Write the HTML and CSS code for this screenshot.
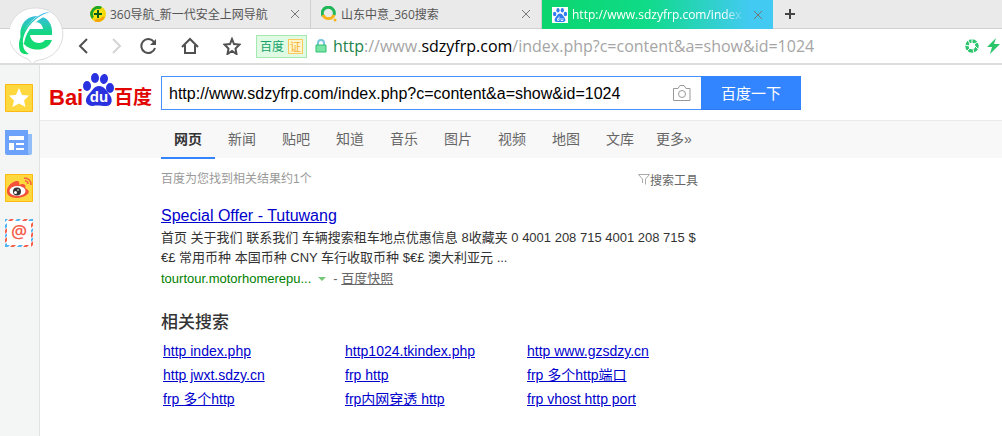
FILE: index.html
```html
<!DOCTYPE html>
<html lang="zh-CN">
<head>
    <meta charset="UTF-8">
    <meta name="viewport" content="width=device-width, initial-scale=1.0">
    <title>百度搜索</title>
    <link rel="stylesheet" href="styles.css">
</head>
<body>
<header class="browser">
    <a class="brand" href="#" aria-label="360">
        <svg width="54" height="58" viewBox="0 0 54 58">
            <defs>
                <linearGradient id="eColor" gradientUnits="userSpaceOnUse" x1="0" y1="6" x2="0" y2="47">
                    <stop offset="0" stop-color="#3fb8f2"/>
                    <stop offset="0.5" stop-color="#14d780"/>
                    <stop offset="1" stop-color="#12dc66"/>
                </linearGradient>
            </defs>
            <path d="M27 1a26 26 0 0 1 7 51q-5 1-8 2l-4 3-4-5A26 26 0 0 1 27 1z" fill="#fff" stroke="#dcdcdc"/>
            <path fill="url(#eColor)" fill-rule="evenodd" d="M42 28H20c1 9 12 10 15 5h7c-4 12-21 12-28 4C7 29 10 10 26 9c12 0 17 8 16 19zM20 22h13c-1-9-12-9-13 0z"/>
            <path d="M39 6C29 8 15 19 12 36" fill="none" stroke="#fff" stroke-width="4"/>
            <path d="M40 5C27 5 9 24 9 38c0 8 4 10 10 9-5-3-6-7-6-11C12 25 24 9 40 5z" fill="url(#eColor)"/>
        </svg>
    </a>
    <nav class="tabs">
        <div class="tab">
            <svg class="tabicon" width="16" height="16" viewBox="0 0 16 16">
                <circle cx="8" cy="8" r="8" fill="#f6d90c"/>
                <path d="M2 13A8 8 0 0 1 12 1L8 6z" fill="#1fa52c"/>
                <path d="M4 15a8 8 0 0 0 11-4L9 10z" fill="#f4a50a"/>
                <circle cx="8" cy="8" r="5" fill="#fbe516"/>
                <path d="M8 4v8M4 8h8" stroke="#075c17" stroke-width="2"/>
            </svg>
            <a class="tabname" href="#">360导航_新一代安全上网导航</a>
            <button class="close" aria-label="关闭"><svg width="10" height="10" viewBox="0 0 10 10"><path d="M1 1l8 8M9 1L1 9"/></svg></button>
        </div>
        <div class="tab">
            <svg class="tabicon" width="16" height="16" viewBox="0 0 16 16">
                <path d="M2 10A6 6 0 1 1 13 9" fill="none" stroke="#1fb758" stroke-width="3"/>
                <path d="M2 9a6 6 0 0 0 11 0" fill="none" stroke="#f8b51c" stroke-width="3"/>
                <circle cx="14" cy="14" r="1.5" fill="#f8b51c"/>
            </svg>
            <a class="tabname" href="#">山东中意_360搜索</a>
            <button class="close" aria-label="关闭"><svg width="10" height="10" viewBox="0 0 10 10"><path d="M1 1l8 8M9 1L1 9"/></svg></button>
        </div>
        <div class="tab active">
            <svg class="tabicon" width="16" height="16" viewBox="0 0 16 16">
                <rect width="16" height="16" fill="#fff"/>
                <g fill="#2e7cf0">
                    <ellipse cx="2.7" cy="7" rx="1.7" ry="2.2"/>
                    <ellipse cx="6" cy="3.2" rx="1.6" ry="2.3"/>
                    <ellipse cx="10.3" cy="3.2" rx="1.6" ry="2.3"/>
                    <ellipse cx="13.4" cy="7" rx="1.7" ry="2.2"/>
                    <path d="M8 6.5c2 0 3 2 4 3.500 2 2 2 5-1 5H5c-3 0-3-3-1-5C5 8.500 6 6.500 8 6.500z"/>
                </g>
                <path d="M7 9.500v4H5.500v-2H7M9 11v2.500h2V11" fill="none" stroke="#fff" stroke-width="0.8"/>
            </svg>
            <a class="tabname" href="#">http://www.sdzyfrp.com/index</a>
            <button class="close" aria-label="关闭"><svg width="10" height="10" viewBox="0 0 10 10"><path d="M1 1l8 8M9 1L1 9"/></svg></button>
        </div>
        <button class="newtab" aria-label="新标签页"><svg width="12" height="12" viewBox="0 0 12 12"><path d="M6 1v10M1 6h10" stroke="#444" stroke-width="2"/></svg></button>
    </nav>
    <div class="toolbar">
        <div class="navbtns">
            <div class="history">
                <button aria-label="后退"><svg width="18" height="18" viewBox="0 0 18 18"><path d="M12 2L5 9l7 7" fill="none" stroke="#505050" stroke-width="2"/></svg></button>
                <button aria-label="前进"><svg width="18" height="18" viewBox="0 0 18 18"><path d="M6 2l7 7-7 7" fill="none" stroke="#d4d4d4" stroke-width="2"/></svg></button>
                <button aria-label="刷新"><svg width="18" height="18" viewBox="0 0 18 18"><path d="M15 5a7 7 0 1 0 1 6" fill="none" stroke="#505050" stroke-width="2"/><path d="M17 2v6h-6z" fill="#505050"/></svg></button>
            </div>
            <button aria-label="主页"><svg width="18" height="18" viewBox="0 0 18 18"><path d="M1 10l8-8 8 8M4 8v8h10V8" fill="none" stroke="#505050" stroke-width="2"/></svg></button>
            <button aria-label="收藏"><svg width="18" height="18" viewBox="0 0 18 18"><path d="M9 2l2 5 5.500.5-4 4 1 5.500L9 14l-4.500 3 1-5.500-4-4L7 7z" fill="none" stroke="#505050" stroke-width="2"/></svg></button>
        </div>
        <span class="site">百度<span class="cert">证</span></span>
        <svg class="lock" width="12" height="14" viewBox="0 0 12 14">
            <path d="M3 6V4a3 3 0 0 1 6 0v2" fill="none" stroke="#77c5dc" stroke-width="2"/>
            <path d="M1 6h10v7H1z" fill="#79e5a5" stroke="#31bd72"/>
        </svg>
        <a class="address" href="#"><span class="scheme">http</span>://www.<span class="host">sdzyfrp.com</span>/index.php?c=content&amp;a=show&amp;id=1024</a>
        <div class="tools">
            <button aria-label="极速"><svg width="14" height="14" viewBox="0 0 14 14"><circle cx="7" cy="7" r="5" fill="none" stroke="#2bc56c" stroke-width="3.500"/><path d="M7 4V0M9 5l4-2M10 7l3 3M8 10l1 4M5 9l-3 3M4 7L0 6M5 5L3 1" stroke="#fff"/></svg></button>
            <button aria-label="加速"><svg width="13" height="16" viewBox="0 0 13 16"><path d="M9 0L0 9h5l-2 7 10-10H7z" fill="#2bc56c"/></svg></button>
        </div>
    </div>
</header>
<div class="container">
    <aside class="side">
        <a href="#" aria-label="收藏夹"><svg width="28" height="28" viewBox="0 0 28 28"><path d="M.5.5h27v27H.5z" fill="#ffd83f" stroke="#fcba12"/><path d="M14 4l3 7 7 .5-5 5 1.500 6.500L14 19.500 7.500 23 9 16.500l-5-5 7-.5z" fill="#fff"/></svg></a>
        <a href="#" aria-label="新闻"><svg width="28" height="28" viewBox="0 0 28 28"><path d="M22 5h5v19q0 2-3 2h-4z" fill="#91bdf8"/><path d="M0 1h23v22q0 3 2 3H2q-2 0-2-2z" fill="#6da2fb"/><path d="M4 7h15v4H4zM4 14h5v7H4zM11 14h8v2h-8zM11 19h8v2h-8z" fill="#fff"/></svg></a>
        <a href="#" aria-label="微博"><svg width="28" height="28" viewBox="0 0 28 28"><path d="M.5.5h27v27H.5z" fill="#ffd83f" stroke="#fcba12"/><path d="M2 18C1 13 8 6 13 7q2 1 1 4 4-2 6 0 1 2 0 3c9 4 0 10-8 10-6 0-10-3-10-6z" fill="#f4513b"/><ellipse cx="12.500" cy="17" rx="8" ry="5" fill="#fff"/><circle cx="12" cy="17.500" r="4" fill="#333"/><circle cx="10.500" cy="18.500" r="1.500" fill="#fff"/><circle cx="13" cy="16" r="0.8" fill="#fff"/><path d="M19 4q7 0 7 7M20 7q3 0 3 3" fill="none" stroke="#f4663b" stroke-width="1.500"/></svg></a>
        <a href="#" aria-label="邮箱"><svg width="28" height="28" viewBox="0 0 28 28">
            <path d="M0 0h28v28H0z" fill="#fff"/>
            <path d="M5 0h4L7 2H3zM19 0h4l-2 2h-4zM7 26h4l-2 2H5zM20 26h4l-2 2h-4zM0 11l2-2v4l-2 2zM0 20l2-2v4l-2 2zM26 5l2-2v4l-2 2zM26 15l2-2v4l-2 2zM26 24l2-2v4l-2 2z" fill="#f5604c"/>
            <path d="M12 0h4l-2 2h-4zM25 0h3v2h-5zM0 0h3L0 3zM0 6l2-2v4l-2 2zM0 16l2-2v3l-2 2zM0 25l2-1v2h3l-2 2H0zM14 26h4l-2 2h-4zM26 11l2-2v3l-2 2zM26 20l2-2v3l-2 2z" fill="#50b4f3"/>
            <text class="at" x="14" y="19" text-anchor="middle">@</text>
        </svg></a>
    </aside>
    <main class="page">
        <form class="search" action="#">
            <a class="logo" href="#" aria-label="百度">
                <svg width="106" height="36" viewBox="0 0 106 36">
                    <g fill="#2a32e0">
                        <ellipse cx="38" cy="14" rx="4" ry="5"/>
                        <ellipse cx="46" cy="6" rx="4" ry="5"/>
                        <ellipse cx="55" cy="7" rx="4" ry="5" transform="rotate(12 55 7)"/>
                        <ellipse cx="61" cy="16" rx="4" ry="5"/>
                        <path d="M50 14c5 0 7 4 10 8 4 4 4 12-3 12-5 0-9-1-13 0-8 0-9-7-4-12 4-4 5-8 10-8z"/>
                    </g>
                    <text class="red" x="0" y="33">Bai</text>
                    <text class="du" x="50" y="30" text-anchor="middle">du</text>
                    <text class="red cn" x="65" y="32">百度</text>
                </svg>
            </a>
            <div class="box">
                <input class="ipt" type="text" name="wd" aria-label="搜索" value="http://www.sdzyfrp.com/index.php?c=content&amp;a=show&amp;id=1024">
                <button class="camera" type="button" aria-label="图片搜索"><svg width="18" height="16" viewBox="0 0 18 16"><path d="M1 3.500h4l2-3h4l2 3h4v12H.5v-12z" fill="none" stroke="#999"/><circle cx="9" cy="9" r="3.500" fill="none" stroke="#999"/></svg></button>
            </div>
            <button class="submit" type="submit">百度一下</button>
        </form>
        <nav class="types">
            <a class="on" href="#">网页</a>
            <a href="#">新闻</a>
            <a href="#">贴吧</a>
            <a href="#">知道</a>
            <a href="#">音乐</a>
            <a href="#">图片</a>
            <a href="#">视频</a>
            <a href="#">地图</a>
            <a href="#">文库</a>
            <a href="#">更多»</a>
        </nav>
        <div class="content">
            <div class="count">
                <span>百度为您找到相关结果约1个</span>
                <button class="filter"><svg width="12" height="12" viewBox="0 0 12 12"><path d="M.5 1.500h11L7.500 6v5.500M.5 1.500L4.500 6v4" fill="none" stroke="#aaa"/></svg>搜索工具</button>
            </div>
            <article class="result">
                <h3><a href="#">Special Offer - Tutuwang</a></h3>
                <p>首页 关于我们 联系我们 车辆搜索租车地点优惠信息 8收藏夹 0 4001 208 715 4001 208 715 $€£ 常用币种 本国币种 CNY 车行收取币种 $€£ 澳大利亚元 ...</p>
                <div class="source">
                    <span>tourtour.motorhomerepu...</span>
                    <svg width="8" height="4" viewBox="0 0 8 4"><path d="M0 0h8L4 4z" fill="#77c779"/></svg>
                    <span class="cache">- <a href="#">百度快照</a></span>
                </div>
            </article>
            <section class="related">
                <h2>相关搜索</h2>
                <table>
                    <tr>
                        <td><a href="#">http index.php</a></td>
                        <td><a href="#">http1024.tkindex.php</a></td>
                        <td><a href="#">http www.gzsdzy.cn</a></td>
                    </tr>
                    <tr>
                        <td><a href="#">http jwxt.sdzy.cn</a></td>
                        <td><a href="#">frp http</a></td>
                        <td><a href="#">frp 多个http端口</a></td>
                    </tr>
                    <tr>
                        <td><a href="#">frp 多个http</a></td>
                        <td><a href="#">frp内网穿透 http</a></td>
                        <td><a href="#">frp vhost http port</a></td>
                    </tr>
                </table>
            </section>
        </div>
    </main>
</div>
</body>
</html>
```
FILE: styles.css
```css
* {
    box-sizing: border-box;
}

body {
    margin: 0;
    min-height: 100vh;
    display: flex;
    flex-direction: column;
    font-family: "Liberation Sans", "Noto Sans CJK SC", sans-serif;
    color: #333;
    background: #fff;
}

button {
    border: 0;
    padding: 0;
    background: none;
    font-family: inherit;
    cursor: pointer;
}

svg {
    display: block;
    flex-shrink: 0;
}

/* browser frame */
.browser {
    position: relative;
    font-family: "Open Sans", "Noto Sans CJK SC", sans-serif;
}

.brand {
    position: absolute;
    left: 10px;
    top: 7px;
}

.tabs {
    display: flex;
    height: 29px;
    padding-left: 80px;
    background: #eaeaea;
    border-bottom: 1px solid #d0d0d0;
}

.tab {
    display: flex;
    align-items: center;
    flex: 0 1 231px;
    min-width: 0;
    height: 28px;
    padding: 0 10px;
    border-right: 1px solid #d0d0d0;
}

.tab.active {
    height: 29px;
    border-right: 0;
    background: linear-gradient(to right, #0bd56d 0%, #0fdb88 45%, #43caf2 90%);
}

.tabname {
    flex: 1;
    min-width: 0;
    margin: 0 8px 0 4px;
    overflow: hidden;
    white-space: nowrap;
    font-size: 12px;
    color: #555;
    text-decoration: none;
}

.active .tabname {
    color: #fff;
    font-weight: 500;
    mask-image: linear-gradient(to right, #000 88%, transparent);
}

.close path {
    fill: none;
    stroke: #777;
}

.newtab {
    margin-left: 11px;
}

.toolbar {
    display: flex;
    align-items: center;
    height: 36px;
    padding-left: 75px;
    border-bottom: 2px solid #dcdcdc;
}

.navbtns {
    display: flex;
    gap: 24px;
}

.history {
    display: flex;
    gap: 14px;
}

.site {
    display: flex;
    align-items: center;
    gap: 4px;
    flex-shrink: 0;
    height: 23px;
    margin-left: 15px;
    padding: 0 3px;
    border: 1px solid #a5e8b0;
    background: #dffbe3;
    color: #16a36a;
    font-size: 12px;
}

.cert {
    padding: 0 1px;
    border: 1px solid #fbc95c;
    background: #fff6cd;
    color: #f5ae2e;
    font-size: 11px;
    line-height: 13px;
}

.lock {
    margin: 0 6px 0 8px;
}

.address {
    flex: 1;
    min-width: 0;
    overflow: hidden;
    white-space: nowrap;
    font-size: 16px;
    color: #a5a5a5;
    text-decoration: none;
}

.scheme {
    color: #21824a;
}

.host {
    color: #000;
}

.tools {
    display: flex;
    align-items: center;
    gap: 8px;
    padding-right: 2px;
}

/* page */
.container {
    flex: 1;
    display: flex;
}

.side {
    display: flex;
    flex-direction: column;
    gap: 17px;
    width: 40px;
    padding: 19px 5px;
    background: #f4f6f5;
    border-right: 1px solid #e2e2e2;
}

.at {
    font: 600 18px "Open Sans", sans-serif;
    fill: #f5604c;
}

.page {
    flex: 1;
    min-width: 0;
}

.search {
    display: flex;
    align-items: flex-start;
    height: 56px;
    padding: 11px 0 0 9px;
    border-bottom: 1px solid #ebebeb;
}

.logo {
    width: 112px;
    margin-top: -4px;
}

.red {
    font: bold 22px "Liberation Sans", sans-serif;
    fill: #e10601;
}

.red.cn {
    font: bold 19px "Noto Sans CJK SC", sans-serif;
}

.du {
    font: bold 15px "Liberation Sans", sans-serif;
    fill: #fff;
}

.box {
    display: flex;
    flex: 0 1 540px;
    height: 34px;
    padding-right: 10px;
    border: 1px solid #4791ff;
    border-right: 0;
}

.ipt {
    flex: 1;
    min-width: 0;
    border: 0;
    outline: 0;
    padding: 2px 7px 0;
    font: 16px "Liberation Sans", sans-serif;
    color: #000;
    background: none;
}

.submit {
    width: 100px;
    height: 34px;
    background: #3385ff;
    border-bottom: 1px solid #2d78f4;
    color: #fff;
    font-size: 15px;
}

.types {
    display: flex;
    height: 37px;
    padding-left: 121px;
    background: #f8f8f8;
    line-height: 36px;
    font-size: 14px;
}

.types a {
    width: 54px;
    height: 38px;
    text-align: center;
    color: #666;
    text-decoration: none;
}

.types .on {
    font-weight: bold;
    color: #333;
    border-bottom: 2px solid #3385ff;
}

.content {
    max-width: 658px;
    padding-left: 121px;
}

.count {
    display: flex;
    justify-content: space-between;
    height: 44px;
    line-height: 43px;
    font-size: 12px;
    color: #999;
}

.filter {
    height: 42px;
    display: flex;
    align-items: center;
    font-size: 12px;
    color: #666;
}

.result {
    font-size: 13px;
    line-height: 20px;
}

.result h3 {
    margin: 0 0 1px;
    padding-top: 3px;
    font-size: 16px;
    font-weight: normal;
    line-height: 22px;
}

.result p {
    margin: 0;
}

a {
    color: #0000cc;
}

.source {
    display: flex;
    align-items: center;
    gap: 7px;
    height: 22px;
    color: #008000;
}

.source .cache,
.source a {
    color: #666;
}

.related h2 {
    margin: 20px 0 3px;
    font-size: 17px;
    font-weight: 500;
    line-height: 26px;
}

.related table {
    border-spacing: 0;
    font-size: 14px;
    line-height: 24px;
}

.related td {
    min-width: 182px;
    padding: 0 2px;
    white-space: nowrap;
}
```
